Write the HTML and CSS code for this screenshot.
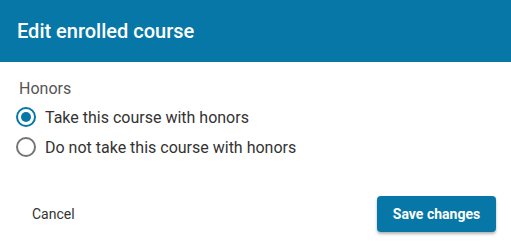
FILE: index.html
```html
<!DOCTYPE html>
<html>
<head>
<meta charset="utf-8">
<link rel="stylesheet" href="styles.css">
</head>
<body>
<div class="dialog">
  <div class="header"><h1 class="title">Edit enrolled course</h1></div>
  <div class="content">
    <div class="legend">Honors</div>
    <label class="option">
      <span class="radio checked"><span class="dot"></span></span>
      <span class="label">Take this course with honors</span>
    </label>
    <label class="option">
      <span class="radio"></span>
      <span class="label">Do not take this course with honors</span>
    </label>
  </div>
  <div class="actions">
    <button class="btn-text">Cancel</button>
    <button class="btn-primary">Save changes</button>
  </div>
</div>
</body>
</html>
```
FILE: styles.css
```css
* { box-sizing: border-box; }
html, body { margin: 0; padding: 0; background: #fff; }
body { font-family: Roboto, "Noto Sans", sans-serif; width: 511px; height: 245px; overflow: hidden; }
.dialog { width: 511px; height: 245px; display: flex; flex-direction: column; }
.header { height: 62px; background: #0677a7; display: flex; align-items: center; padding: 0 17px; }
.title { margin: 0; color: #fff; font-size: 20px; font-weight: 500; letter-spacing: 0; }
.content { padding: 18px 16px 0 16px; flex: 1; }
.legend { font-size: 16px; color: #555; padding-left: 3px; line-height: 18px; margin-bottom: 4px; }
.option { display: flex; align-items: center; height: 30px; cursor: pointer; }
.radio { width: 20px; height: 20px; border-radius: 50%; border: 2px solid #757575; display: flex; align-items: center; justify-content: center; flex: none; }
.radio.checked { border-color: #0677a7; }
.dot { width: 10px; height: 10px; border-radius: 50%; background: #0677a7; }
.label { margin-left: 9px; font-size: 16px; color: #333; }
.actions { display: flex; justify-content: space-between; align-items: center; padding: 0 15px 13px 16px; }
.btn-text { background: none; border: none; font-family: Roboto, sans-serif; font-size: 14px; color: #333; padding: 8px 16px; font-weight: 400; }
.btn-primary { background: #0677a7; color: #fff; border: none; border-radius: 4px; font-family: Roboto, sans-serif; font-size: 14px; font-weight: 700; height: 36px; width: 119px; box-shadow: 0 2px 3px rgba(0,0,0,0.3); }
```
